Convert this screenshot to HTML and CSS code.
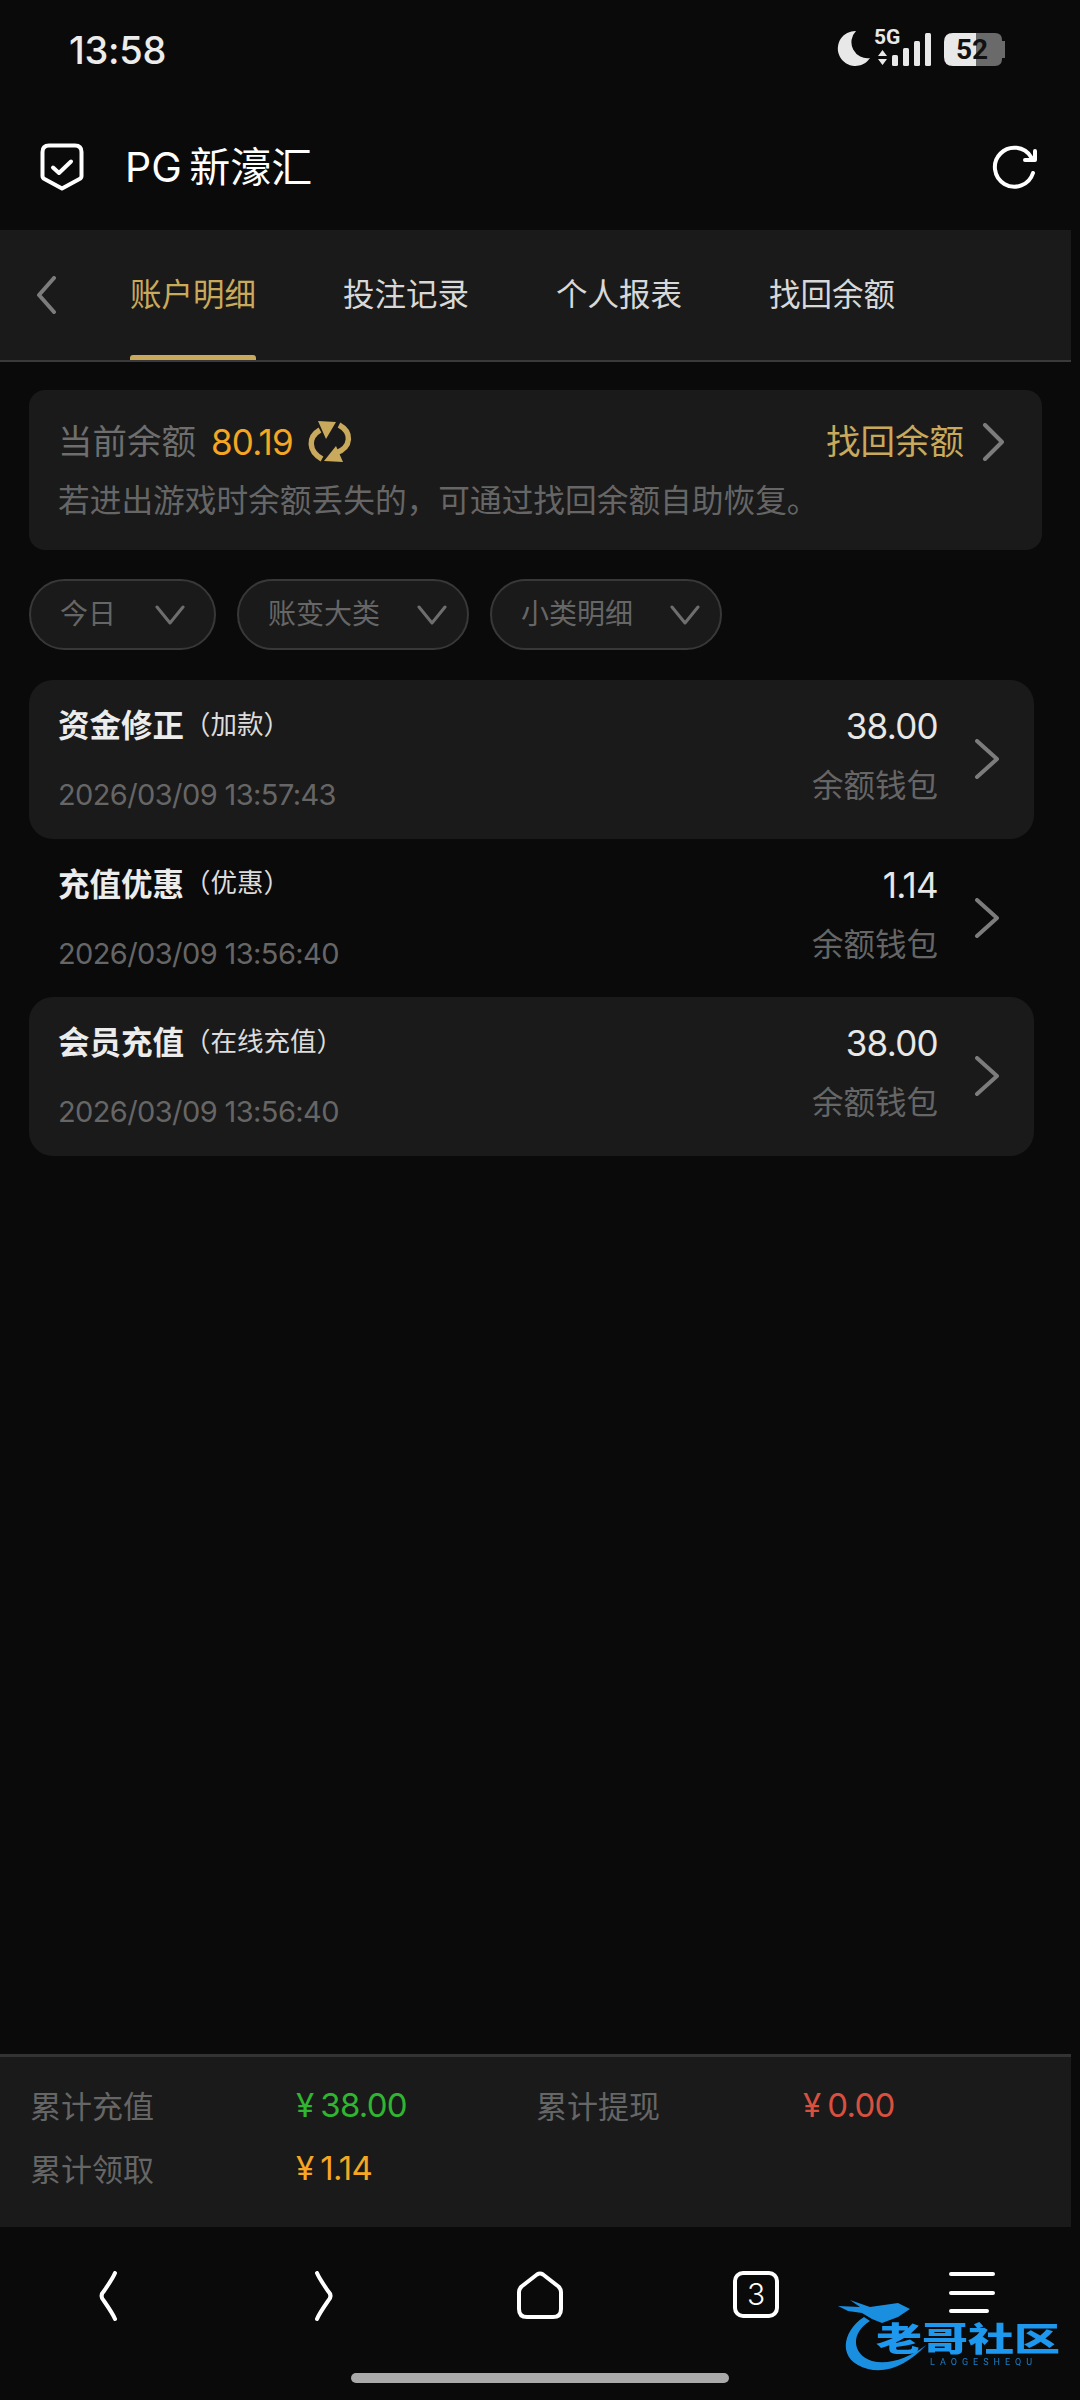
FILE: index.html
```html
<!DOCTYPE html>
<html lang="zh-CN">
<head>
<meta charset="utf-8">
<title>账户明细</title>
<link rel="stylesheet" href="styles.css">
</head>
<body>
<div class="screen">
  <div class="status">
    <span class="clock">13:58</span>
    <svg class="status-icons" width="172" height="52" viewBox="0 -12 172 52">
      <path class="si-fill" d="M21 2 A17.500 17.500 0 1 0 35 29 A16 16 0 0 1 21 2 Z"/>
      <text class="si-5g" x="39" y="15">5G</text>
      <path class="si-fill" d="M47.500 21 L52 27 H43 Z M43 30 H52 L47.500 36 Z"/>
      <rect class="si-fill" x="57" y="26" width="6" height="11" rx="1.500"/>
      <rect class="si-fill" x="68" y="19" width="6" height="18" rx="1.500"/>
      <rect class="si-fill" x="79" y="12" width="6" height="25" rx="1.500"/>
      <rect class="si-fill" x="90" y="4" width="6" height="33" rx="1.500"/>
      <path class="si-grey" d="M130 4 H160 Q167 4 167 11 V12 H170 V29 H167 V30 Q167 37 160 37 H130 Z"/>
      <path class="si-fill" d="M141 4 H118 Q109 4 109 13 V28 Q109 37 118 37 H141 Z"/>
      <text class="si-batt" x="121" y="30">52</text>
    </svg>
  </div>

  <header class="appbar">
    <div class="brand">
      <svg class="shield" width="44" height="48" viewBox="0 0 44 48">
        <path class="line-w" d="M9 2.500 H35 Q41.500 2.500 41.500 9 V33 Q41.500 35 39.500 36 L22 45.500 L4.500 36 Q2.500 35 2.500 33 V9 Q2.500 2.500 9 2.500 Z"/>
        <path class="line-w" d="M13 24.500 L19 30 L31 18.500"/>
      </svg>
      <span class="brand-name">PG 新濠汇</span>
    </div>
    <svg class="reload" width="46" height="46" viewBox="0 0 46 46">
      <path class="line-w" d="M41 29 A19.500 19.500 0 1 1 39 13"/>
      <path class="line-w" d="M43 7 V16 H33"/>
    </svg>
  </header>

  <div class="webview">
    <nav class="tabs">
      <svg class="tab-back" width="24" height="38" viewBox="0 0 24 38"><path d="M20 2 L5 19 L20 36"/></svg>
      <a class="tab tab-on">账户明细</a>
      <a class="tab">投注记录</a>
      <a class="tab">个人报表</a>
      <a class="tab">找回余额</a>
    </nav>

    <section class="balance">
      <div class="balance-top">
        <span class="b-label">当前余额</span>
        <span class="b-value">80.19</span>
        <svg class="sync" width="46" height="46" viewBox="26 10 46 46">
          <path class="sync-arc" d="M39 21 C27 28 27 42 41 50"/>
          <path class="sync-arc" d="M58 16 C71 23 71 38 55 44"/>
          <path class="sync-head" d="M37 12 L55 13 L45 30 Z M43 52 L62 53 L55 37 Z"/>
        </svg>
        <a class="b-link">找回余额</a>
        <svg class="chev chev-b" width="24" height="38" viewBox="0 0 24 38"><path d="M3 2 L20 19 L3 36"/></svg>
      </div>
      <p class="b-note">若进出游戏时余额丢失的，可通过找回余额自助恢复。</p>
    </section>

    <div class="filters">
      <div class="pill pill-s"><span>今日</span><svg width="30" height="20" viewBox="0 0 30 20"><path d="M2 2 L15 18 L28 2"/></svg></div>
      <div class="pill"><span>账变大类</span><svg width="30" height="20" viewBox="0 0 30 20"><path d="M2 2 L15 18 L28 2"/></svg></div>
      <div class="pill"><span>小类明细</span><svg width="30" height="20" viewBox="0 0 30 20"><path d="M2 2 L15 18 L28 2"/></svg></div>
    </div>

    <div class="list">
      <article class="row row-alt">
        <div class="row-main">
          <div class="row-title"><b>资金修正</b><span>（加款）</span></div>
          <div class="row-date">2026/03/09 13:57:43</div>
        </div>
        <div class="row-side">
          <div class="row-amt">38.00</div>
          <div class="row-wallet">余额钱包</div>
        </div>
        <svg class="chev" width="26" height="40" viewBox="0 0 26 40"><path d="M3 2 L23 20 L3 38"/></svg>
      </article>
      <article class="row">
        <div class="row-main">
          <div class="row-title"><b>充值优惠</b><span>（优惠）</span></div>
          <div class="row-date">2026/03/09 13:56:40</div>
        </div>
        <div class="row-side">
          <div class="row-amt">1.14</div>
          <div class="row-wallet">余额钱包</div>
        </div>
        <svg class="chev" width="26" height="40" viewBox="0 0 26 40"><path d="M3 2 L23 20 L3 38"/></svg>
      </article>
      <article class="row row-alt">
        <div class="row-main">
          <div class="row-title"><b>会员充值</b><span>（在线充值）</span></div>
          <div class="row-date">2026/03/09 13:56:40</div>
        </div>
        <div class="row-side">
          <div class="row-amt">38.00</div>
          <div class="row-wallet">余额钱包</div>
        </div>
        <svg class="chev" width="26" height="40" viewBox="0 0 26 40"><path d="M3 2 L23 20 L3 38"/></svg>
      </article>
    </div>

    <footer class="summary">
      <span class="s-label">累计充值</span><span class="s-val green"><i>¥</i>38.00</span>
      <span class="s-label">累计提现</span><span class="s-val red"><i>¥</i>0.00</span>
      <span class="s-label">累计领取</span><span class="s-val orange"><i>¥</i>1.14</span>
    </footer>
  </div>

  <div class="browser-nav">
    <svg width="26" height="50" viewBox="0 0 26 50"><path class="line-n" d="M20 2 Q18 7 9 20 Q4 25 9 30 Q18 43 20 48"/></svg>
    <svg width="26" height="50" viewBox="0 0 26 50"><path class="line-n" d="M6 2 Q8 7 17 20 Q22 25 17 30 Q8 43 6 48"/></svg>
    <svg width="46" height="48" viewBox="0 0 46 48"><path class="line-n" d="M20 3.500 Q23 1.500 26 3.500 L41.500 15.500 Q44 18 44 21 V38 Q44 46 36 46 H10 Q2 46 2 38 V21 Q2 18 4.500 15.500 Z"/></svg>
    <div class="tabs-count">3</div>
    <svg width="46" height="44" viewBox="0 0 46 44"><path class="line-n" d="M2 3 H44 M2 22 H44 M2 40 H38"/></svg>
  </div>
  <div class="home-bar"></div>

  <div class="watermark">
    <svg class="wm-art" width="130" height="84" viewBox="0 0 130 84">
      <path class="wm-swoosh" d="M26 22 C4 36 -2 66 30 74 C50 79 72 68 88 50 C70 64 50 70 34 66 C14 60 12 38 32 26 Z"/>
      <path class="wm-dragon" d="M0 11 L22 12 L12 5 L32 12 L60 8 L72 14 L60 22 L44 28 L34 24 L24 18 L10 16 Z"/>
    </svg>
    <span class="wm-text">老哥社区</span>
    <span class="wm-sub">LAOGESHEQU</span>
  </div>
</div>
</body>
</html>
```
FILE: styles.css
```css
* { box-sizing: border-box; }
html, body { margin: 0; padding: 0; background: #0a0a0a; }
body { font-family: Inter, "Noto Sans CJK SC", "Noto Sans", sans-serif; color: #fff; }
p { margin: 0; }

.screen { position: relative; width: 1080px; height: 2400px; display: flex; flex-direction: column; overflow: hidden; background: #0a0a0a; }

/* status bar */
.status { height: 100px; display: flex; justify-content: space-between; align-items: flex-start; padding: 31px 73px 0 69px; flex: none; }
.clock { font-size: 38px; line-height: 38px; font-weight: 500; letter-spacing: -0.300px; color: #ececec; }
.status-icons { margin-top: -14px; }
.si-fill { fill: #e8e8e8; }
.si-grey { fill: #6a6a6a; }
.si-5g { font-family: Roboto, sans-serif; font-size: 21px; font-weight: 700; fill: #e8e8e8; }
.si-batt { font-family: Roboto, sans-serif; font-size: 28px; font-weight: 700; fill: #111; }

/* app header */
.appbar { height: 130px; flex: none; display: flex; justify-content: space-between; align-items: center; padding: 4px 42px 0 40px; }
.brand { display: flex; align-items: center; gap: 41px; }
.brand-name { font-size: 41px; line-height: 48px; word-spacing: -4px; color: #fff; }
.line-w { fill: none; stroke: #fff; stroke-width: 4; stroke-linecap: round; stroke-linejoin: round; }

/* webview area */
.webview { width: 1071px; flex: 1; display: flex; flex-direction: column; }

.tabs { height: 132px; flex: none; display: flex; align-items: center; background: #1a1a1a; border-bottom: 2px solid #3a3a3a; padding-left: 34px; }
.tab-back { margin-right: 72px; flex: none; }
.tab-back path, .chev path { fill: none; stroke: #7c7c7c; stroke-width: 4; stroke-linecap: round; stroke-linejoin: round; }
.tab { position: relative; height: 130px; line-height: 130px; font-size: 31.500px; color: #d8d8d8; margin-right: 87px; white-space: nowrap; }
.tab-on { color: #c9a95b; }
.tab-on::after { content: ""; position: absolute; left: 0; right: 0; bottom: 0; height: 5px; border-radius: 3px 3px 0 0; background: #c9a95b; }

.balance { margin: 28px 0 0 29px; width: 1013px; height: 160px; flex: none; background: #1a1a1a; border-radius: 16px; padding: 30px 36px 0 29px; }
.balance-top { display: flex; align-items: center; height: 44px; }
.b-label { font-size: 34.500px; line-height: 44px; color: #6e6e6e; }
.b-value { font-size: 35px; line-height: 44px; letter-spacing: -0.800px; color: #f5a623; margin-left: 15px; }
.sync { margin-left: 14px; }
.sync-arc { fill: none; stroke: #c9a95b; stroke-width: 5.500; }
.sync-head { fill: #c9a95b; }
.b-link { margin-left: auto; font-size: 34.500px; line-height: 44px; color: #c9a95b; }
.chev-b { margin-left: 18px; }
.b-note { margin-top: 16px; font-size: 31.700px; line-height: 42px; color: #666; white-space: nowrap; }

.filters { display: flex; gap: 21px; margin: 29px 0 0 29px; flex: none; }
.pill { height: 71px; width: 232px; border: 2px solid #383838; border-radius: 36px; background: #1a1a1a; display: flex; align-items: center; justify-content: space-between; padding: 0 20px 5px 29px; font-size: 28px; color: #666; }
.pill-s { width: 187px; padding-right: 29px; }
.pill svg { flex: none; margin-bottom: -5px; }
.pill path { fill: none; stroke: #6e6e6e; stroke-width: 3; stroke-linecap: round; stroke-linejoin: round; }

.list { margin: 30px 0 0 29px; width: 1005px; flex: none; }
.row { height: 158.500px; display: flex; align-items: stretch; border-radius: 24px; padding: 0 34px 0 29px; }
.row-alt { background: #1a1a1a; }
.row-main { flex: 1; display: flex; flex-direction: column; }
.row-title { height: 46px; margin-top: 20px; display: flex; align-items: center; }
.row-title b { font-size: 31.500px; font-weight: 700; color: #ececec; }
.row-title span { font-size: 26.500px; color: #dcdcdc; margin-top: -2px; }
.row-date { margin-top: 30px; font-size: 29px; line-height: 38px; letter-spacing: -0.600px; color: #666; white-space: nowrap; }
.row-side { text-align: right; display: flex; flex-direction: column; align-items: flex-end; }
.row-amt { margin-top: 23px; font-size: 35px; line-height: 46px; letter-spacing: -0.700px; color: #e8e8e8; }
.row-wallet { margin-top: 15px; font-size: 31.500px; line-height: 44px; color: #666; }
.row .chev { align-self: center; margin-left: 36px; flex: none; }

.summary { margin-top: auto; height: 173px; flex: none; background: #1a1a1a; border-top: 3px solid #333; display: grid; grid-template-columns: 266px 240px 267px 1fr; grid-auto-rows: 63px; align-items: center; padding: 16px 0 0 30px; }
.s-label { font-size: 31px; color: #666; }
.s-val { font-size: 33px; letter-spacing: -0.800px; }
.s-val i { font-style: normal; margin-right: 7px; }
.green { color: #2fb52f; }
.red { color: #d9503f; }
.orange { color: #f5a623; }

/* browser nav */
.browser-nav { height: 102px; flex: none; margin-top: 44px; display: grid; grid-template-columns: repeat(5, 1fr); justify-items: center; align-items: start; }
.line-n { fill: none; stroke: #fff; stroke-width: 4; stroke-linecap: round; stroke-linejoin: round; }
.tabs-count { width: 46px; height: 47px; border: 4px solid #fff; border-radius: 10px; font-size: 30px; font-weight: 300; line-height: 39px; text-align: center; color: #fff; }
.home-bar { width: 378px; height: 10px; margin: 0 auto 17px; border-radius: 5px; background: #aaa; flex: none; }

/* watermark overlay */
.watermark { position: absolute; left: 838px; top: 2295px; width: 230px; height: 84px; filter: blur(0.6px); }
.wm-art { position: absolute; left: 0; top: 0; }
.wm-swoosh { fill: #1a8fe0; }
.wm-dragon { fill: #1a8fe0; }
.wm-text { position: absolute; left: 38px; top: 22px; font-size: 46px; line-height: 44px; font-weight: 900; color: #1e97ee; white-space: nowrap; transform: scaleY(0.72); }
.wm-sub { position: absolute; left: 92px; top: 62px; font-family: Roboto, sans-serif; font-size: 9px; line-height: 10px; letter-spacing: 5px; color: #1a7fc8; white-space: nowrap; }
```
